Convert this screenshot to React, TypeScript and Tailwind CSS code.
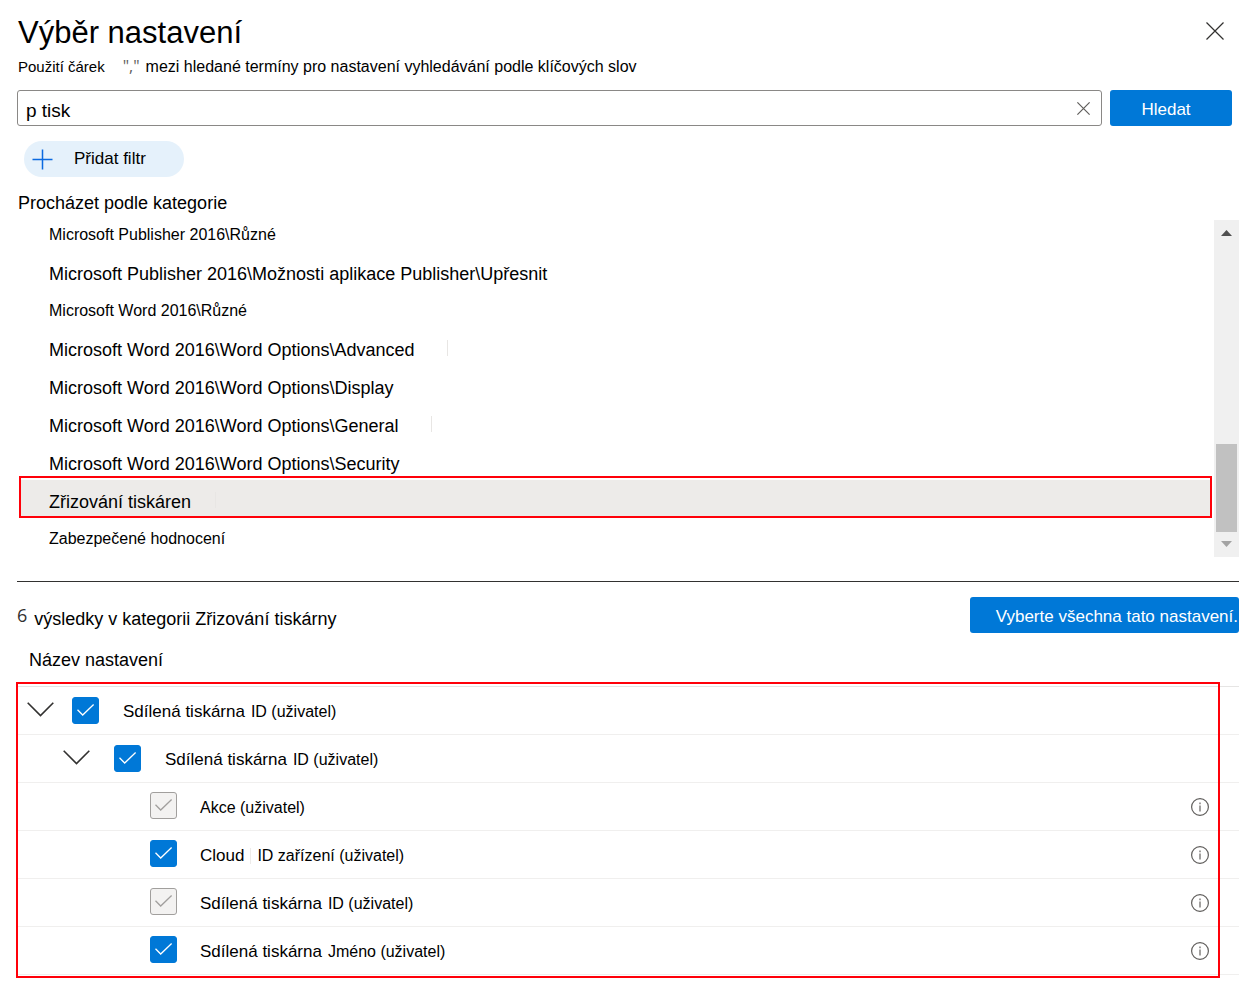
import React, { useState } from 'react';

type Category = { label: string; small?: boolean; caret?: string };

const CATEGORIES: Category[] = [
  { label: 'Microsoft Publisher 2016\\Různé', small: true },
  { label: 'Microsoft Publisher 2016\\Možnosti aplikace Publisher\\Upřesnit' },
  { label: 'Microsoft Word 2016\\Různé', small: true },
  { label: 'Microsoft Word 2016\\Word Options\\Advanced', caret: 'ml-8' },
  { label: 'Microsoft Word 2016\\Word Options\\Display' },
  { label: 'Microsoft Word 2016\\Word Options\\General', caret: 'ml-8' },
  { label: 'Microsoft Word 2016\\Word Options\\Security' },
  { label: 'Zřizování tiskáren', caret: 'ml-6' },
  { label: 'Zabezpečené hodnocení', small: true },
];

type Setting = {
  id: string;
  level: 1 | 2 | 3;
  name: string;
  suffix?: string;
  locked?: boolean;
  divided?: boolean;
};

const SETTINGS: Setting[] = [
  { id: 'root', level: 1, name: 'Sdílená tiskárna', suffix: 'ID (uživatel)' },
  { id: 'group', level: 2, name: 'Sdílená tiskárna', suffix: 'ID (uživatel)' },
  { id: 'action', level: 3, name: '', suffix: 'Akce (uživatel)', locked: true },
  { id: 'cloud', level: 3, name: 'Cloud', suffix: 'ID zařízení (uživatel)', divided: true },
  { id: 'shared-id', level: 3, name: 'Sdílená tiskárna', suffix: 'ID (uživatel)', locked: true },
  { id: 'shared-name', level: 3, name: 'Sdílená tiskárna', suffix: 'Jméno (uživatel)' },
];

const INDENT = {
  1: 'pl-[10px] gap-[18px]',
  2: 'pl-[46px] gap-6',
  3: 'pl-[133px]',
};

const LABEL_GAP = {
  1: 'ml-1.5',
  2: 'ml-0',
  3: 'ml-[23px]',
};

const Cross: React.FC<{ className: string }> = ({ className }) => (
  <svg viewBox="0 0 18 18" className={className} fill="none" stroke="currentColor" aria-hidden="true">
    <path d="M0.5 0.5L17.5 17.5M17.5 0.5L0.5 17.5" strokeWidth="1.2" vectorEffect="non-scaling-stroke" />
  </svg>
);

const Chevron: React.FC = () => (
  <svg viewBox="0 0 27 15" className="w-[27px] h-[15px]" fill="none" stroke="#323130" strokeWidth="1.6" aria-hidden="true">
    <path d="M0.7 0.8L13.5 13.6L26.3 0.8" />
  </svg>
);

const InfoIcon: React.FC = () => (
  <svg viewBox="0 0 18 18" className="w-[18px] h-[18px]" fill="none" aria-hidden="true">
    <circle cx="9" cy="9" r="8.4" stroke="#605e5c" strokeWidth="1.2" />
    <path d="M9 7.5V13.5" stroke="#8a8886" strokeWidth="1.6" />
    <path d="M9 4.6V6.2" stroke="#8a8886" strokeWidth="1.6" />
  </svg>
);

const SettingRow: React.FC<{ setting: Setting }> = ({ setting }) => {
  const [checked, setChecked] = useState(true);
  const { id, level, name, suffix, locked, divided } = setting;

  return (
    <tr>
      <td className="h-12 p-0 border-b border-[#f0efee]">
        <div className={`flex items-center ${INDENT[level]}`}>
          {level < 3 && (
            <button type="button" aria-label="Sbalit" className="pb-0.5">
              <Chevron />
            </button>
          )}
          <span className={`grid w-[27px] ${level === 3 ? 'pb-0.5' : ''}`}>
            <input
              id={id}
              type="checkbox"
              checked={checked}
              disabled={locked}
              onChange={() => setChecked(!checked)}
              className={`[grid-area:1/1] appearance-none w-[27px] h-[27px] rounded-[3px] border ${
                locked ? 'bg-[#f3f2f1] border-[#a19f9d]' : 'bg-[#0078d7] border-[#0078d7]'
              }`}
            />
            {checked && (
              <svg
                viewBox="0 0 27 27"
                className="[grid-area:1/1] w-[27px] h-[27px] pointer-events-none"
                fill="none"
                stroke={locked ? '#a19f9d' : '#ffffff'}
                strokeWidth="1.3"
                aria-hidden="true"
              >
                <path d="M5.5 12.8L10.7 18L21.6 7.5" />
              </svg>
            )}
          </span>
          <label htmlFor={id} className={`flex items-baseline pt-0.5 ${LABEL_GAP[level]}`}>
            {name && <span className="text-[17px] leading-6">{name}</span>}
            {divided && <span className="self-center w-px h-4 ml-1.5 bg-[#edebe9]" />}
            <span className={`text-base leading-6 ${name ? 'ml-1.5' : ''}`}>{suffix}</span>
          </label>
        </div>
      </td>
      <td className="h-12 p-0 pr-[30px] border-b border-[#f0efee]">
        {level === 3 && (
          <button type="button" aria-label="Informace" className="block ml-auto">
            <InfoIcon />
          </button>
        )}
      </td>
    </tr>
  );
};

const App: React.FC = () => {
  const [query, setQuery] = useState('p tisk');
  const [selected, setSelected] = useState('Zřizování tiskáren');

  return (
    <main className="min-h-screen bg-white text-black pl-[17px] pr-[15px] pt-3 pb-2.5 font-['Liberation_Sans',Arial,sans-serif]">
      {/* Title */}
      <header className="flex items-center justify-between pl-px pr-[15px]">
        <h1 className="pt-px text-[31px] leading-10">Výběr nastavení</h1>
        <button type="button" aria-label="Zavřít" className="pb-1 text-[#323130]">
          <Cross className="w-[18px] h-[18px]" />
        </button>
      </header>
      <p className="flex items-baseline h-5 mt-[3px] pl-px text-base leading-5">
        <span className="text-[15px]">Použití čárek</span>
        <span className="ml-[18px] mr-1.5 text-[#605e5c] font-['Open_Sans',sans-serif]">","</span>
        <span>mezi hledané termíny pro nastavení vyhledávání podle klíčových slov</span>
      </p>

      {/* Search */}
      <form className="flex gap-2 mt-3.5 pr-[7px]" onSubmit={e => e.preventDefault()}>
        <div className="flex flex-1 items-center h-9 pl-2 pr-[11px] border border-[#8a8886] rounded-[3px]">
          <input
            type="text"
            aria-label="Hledat nastavení"
            value={query}
            onChange={e => setQuery(e.target.value)}
            className="flex-1 min-w-0 pt-1.5 text-[19px] leading-6 outline-none"
          />
          <button type="button" aria-label="Vymazat" className="text-[#605e5c]" onClick={() => setQuery('')}>
            <Cross className="w-[13px] h-[13px]" />
          </button>
        </div>
        <button type="submit" className="w-[122px] h-9 pt-1 pr-2.5 rounded-[3px] bg-[#0078d7] text-white text-[17px]">
          Hledat
        </button>
      </form>

      <button type="button" className="flex items-center w-40 h-9 mt-[15px] ml-[7px] pl-2 rounded-full bg-[#e5f1fb] text-[17px]">
        <svg viewBox="0 0 21 21" className="w-[21px] h-[21px] mr-[21px]" fill="none" stroke="#0b6ae0" strokeWidth="1.5" aria-hidden="true">
          <path d="M10.5 0.5V20.5M0.5 10.5H20.5" />
        </svg>
        Přidat filtr
      </button>

      {/* Categories */}
      <section>
        <h2 className="mt-[13px] pt-0.5 pl-px text-lg leading-[22px]">Procházet podle kategorie</h2>
        <div className="flex gap-0.5">
          <ul className="flex-1 pl-0.5">
            {CATEGORIES.map(item => {
              const active = item.label === selected;
              return (
                <li key={item.label} className={`relative ${active ? 'bg-[#edebe9]' : ''}`}>
                  <button
                    type="button"
                    onClick={() => setSelected(item.label)}
                    className={`flex items-center w-full h-[38px] pl-[30px] text-left ${item.small ? 'pt-1 text-base' : 'pt-1.5 text-lg'}`}
                  >
                    {item.label}
                    {item.caret && <span className={`w-px h-4 -mt-1 bg-[#e8e6e4] ${item.caret}`} />}
                  </button>
                  {active && <span className="absolute -top-1 bottom-0 inset-x-0 border-2 border-[#ff0009] pointer-events-none" />}
                </li>
              );
            })}
          </ul>
          {/* Scrollbar */}
          <div className="flex flex-col items-center w-[25px] h-[337px] mt-1.5 bg-[#f0f0f0]" aria-hidden="true">
            <svg viewBox="0 0 11 6" className="w-[11px] h-1.5 mt-2.5" fill="#505050">
              <path d="M0 6L5.5 0L11 6Z" />
            </svg>
            <div className="w-[21px] h-[88px] mt-auto bg-[#c1c1c1]" />
            <svg viewBox="0 0 11 6" className="w-[11px] h-1.5 mt-[9px] mb-2.5" fill="#a3a3a3">
              <path d="M0 0L5.5 6L11 0Z" />
            </svg>
          </div>
        </div>
      </section>

      {/* Results */}
      <section className="mt-6 border-t border-[#323130]">
        <div className="flex justify-between mt-[15px]">
          <p className="flex items-center text-lg">
            <span className="text-[#323130] font-medium font-['Open_Sans',sans-serif]">6</span>
            <span className="ml-[7px] pt-2">výsledky v kategorii Zřizování tiskárny</span>
          </p>
          <button type="button" className="h-9 pl-[26px] pt-1 pr-px rounded-[3px] bg-[#0078d7] text-white text-[17px] whitespace-nowrap">
            Vyberte všechna tato nastavení.
          </button>
        </div>
        <div className="relative">
          <table className="w-full border-separate border-spacing-0">
            <thead>
              <tr>
                <th colSpan={2} className="h-[54px] p-0 pl-3 text-left text-lg font-normal border-b border-[#e6e5e4]">
                  Název nastavení
                </th>
              </tr>
            </thead>
            <tbody>
              {SETTINGS.map(setting => (
                <SettingRow key={setting.id} setting={setting} />
              ))}
            </tbody>
          </table>
          <span className="absolute top-[49px] -bottom-[3px] -left-px right-[19px] border-2 border-[#ff0009] pointer-events-none" />
        </div>
      </section>
    </main>
  );
};

export default App;
